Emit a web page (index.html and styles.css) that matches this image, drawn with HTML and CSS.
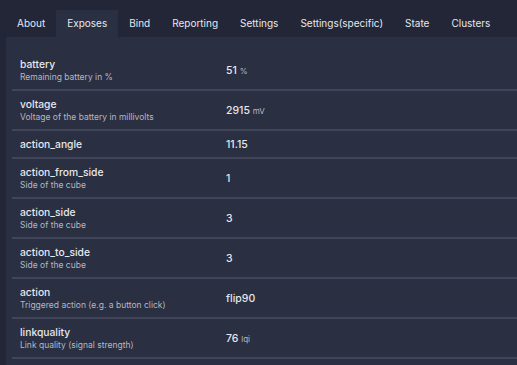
FILE: index.html
```html
<!DOCTYPE html>
<html lang="en">
<head>
    <meta charset="UTF-8">
    <title>Device - Exposes</title>
    <link rel="stylesheet" href="styles.css">
</head>
<body>
    <nav class="tabs">
        <a href="#">About</a>
        <a href="#" class="active">Exposes</a>
        <a href="#">Bind</a>
        <a href="#">Reporting</a>
        <a href="#">Settings</a>
        <a href="#">Settings(specific)</a>
        <a href="#">State</a>
        <a href="#">Clusters</a>
    </nav>
    <main class="panel">
        <table class="exposes">
            <tr>
                <td class="name"><div class="title">battery</div><div class="desc">Remaining battery in %</div></td>
                <td class="value">51 <small>%</small></td>
            </tr>
            <tr>
                <td class="name"><div class="title">voltage</div><div class="desc">Voltage of the battery in millivolts</div></td>
                <td class="value">2915 <small>mV</small></td>
            </tr>
            <tr>
                <td class="name"><div class="title">action_angle</div></td>
                <td class="value">11.15</td>
            </tr>
            <tr>
                <td class="name"><div class="title">action_from_side</div><div class="desc">Side of the cube</div></td>
                <td class="value">1</td>
            </tr>
            <tr>
                <td class="name"><div class="title">action_side</div><div class="desc">Side of the cube</div></td>
                <td class="value">3</td>
            </tr>
            <tr>
                <td class="name"><div class="title">action_to_side</div><div class="desc">Side of the cube</div></td>
                <td class="value">3</td>
            </tr>
            <tr>
                <td class="name"><div class="title">action</div><div class="desc">Triggered action (e.g. a button click)</div></td>
                <td class="value">flip90</td>
            </tr>
            <tr>
                <td class="name"><div class="title">linkquality</div><div class="desc">Link quality (signal strength)</div></td>
                <td class="value">76 <small>lqi</small></td>
            </tr>
        </table>
    </main>
</body>
</html>
```

FILE: styles.css
```css
html, body {
    height: 100%;
    overflow: hidden;
}

body {
    margin: 0;
    background: #222636;
    color: #e6e8ee;
    font-family: Inter, 'Noto Sans', sans-serif;
}

.tabs {
    display: flex;
    padding: 10px 0 0 6px;
    height: 27px;
}

.tabs a {
    display: block;
    padding: 0 11px;
    line-height: 27px;
    font-size: 10px;
    color: #e6e8ee;
    text-decoration: none;
    white-space: nowrap;
}

.tabs a.active {
    background: #2a2f42;
}

.panel {
    margin-left: 6px;
    background: #2a2f42;
    padding: 14px 0 0 6px;
    height: calc(100% - 37px);
    box-sizing: border-box;
}

.exposes {
    width: 100%;
    border-collapse: collapse;
}

.exposes td {
    padding: 6px 8px;
    border-bottom: 2px solid #40455a;
    vertical-align: middle;
}

.exposes .name {
    width: 190px;
}

.title {
    font-size: 10.3px;
    line-height: 14px;
    font-weight: 500;
}

.desc {
    font-size: 8.5px;
    line-height: 12px;
    color: #b4b8c4;
}

.value {
    font-size: 10.5px;
    font-weight: 500;
}

.value small {
    font-size: 8px;
    font-weight: 400;
    color: #b4b8c4;
}
```
